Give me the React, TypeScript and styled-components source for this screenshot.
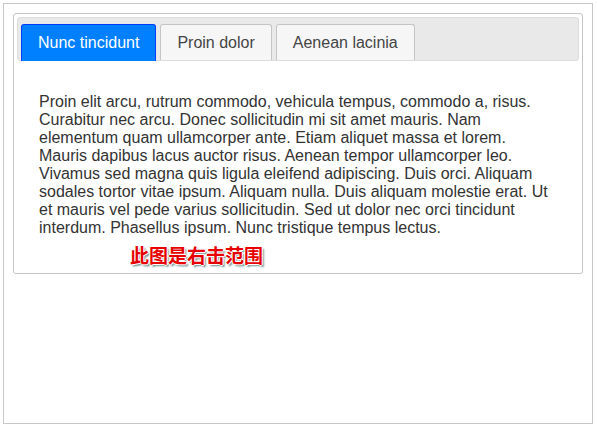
import React, { useState } from 'react';
import styled, { createGlobalStyle } from 'styled-components';

const GlobalStyle = createGlobalStyle`
    body {
        margin: 0;
        background: #fff;
        font-family: 'Liberation Sans', Arial, sans-serif;
    }
`;

const TABS = [
    {
        title: 'Nunc tincidunt',
        text:
            'Proin elit arcu, rutrum commodo, vehicula tempus, commodo a, risus. Curabitur nec arcu. Donec sollicitudin mi sit amet mauris. Nam elementum quam ullamcorper ante. Etiam aliquet massa et lorem. Mauris dapibus lacus auctor risus. Aenean tempor ullamcorper leo. Vivamus sed magna quis ligula eleifend adipiscing. Duis orci. Aliquam sodales tortor vitae ipsum. Aliquam nulla. Duis aliquam molestie erat. Ut et mauris vel pede varius sollicitudin. Sed ut dolor nec orci tincidunt interdum. Phasellus ipsum. Nunc tristique tempus lectus.',
    },
    {
        title: 'Proin dolor',
        text:
            'Morbi tincidunt, dui sit amet facilisis feugiat, odio metus gravida ante, ut pharetra massa metus id nunc. Duis scelerisque molestie turpis. Sed fringilla, massa eget luctus malesuada, metus eros molestie lectus, ut tempus eros massa ut dolor.',
    },
    {
        title: 'Aenean lacinia',
        text:
            'Mauris eleifend est et turpis. Duis id erat. Suspendisse potenti. Aliquam vulputate, pede vel vehicula accumsan, mi neque rutrum erat, eu congue orci lorem eget lorem. Vestibulum non ante.',
    },
];

const App: React.FC = () => {
    const [active, setActive] = useState(0);

    return (
        <>
            <GlobalStyle />
            <Frame>
                <Widget>
                    <Nav>
                        {TABS.map((tab, i) => (
                            <Tab key={tab.title} $active={i === active} onClick={() => setActive(i)}>
                                {tab.title}
                            </Tab>
                        ))}
                    </Nav>
                    <Panel>
                        <p>{TABS[active].text}</p>
                    </Panel>
                    <Note>此图是右击范围</Note>
                </Widget>
            </Frame>
        </>
    );
};

const Frame = styled.div`
    box-sizing: border-box;
    margin: 3px;
    width: 590px;
    height: 421px;
    padding: 9px;
    border: 1px solid #c8c8c8;
`;

const Widget = styled.div`
    position: relative;
    box-sizing: border-box;
    padding: 3px;
    border: 1px solid #c5c5c5;
    border-radius: 3px;
    background: #fff;
    color: #333;
    font-size: 16px;
`;

const Nav = styled.ul`
    display: flex;
    align-items: flex-end;
    gap: 4px;
    margin: 0;
    padding: 3px 3px 0;
    list-style: none;
    border: 1px solid #dddddd;
    border-radius: 3px;
    background: #e9e9e9;
`;

const Tab = styled.li<{ $active: boolean }>`
    margin-top: 3px;
    margin-bottom: ${(p) => (p.$active ? '-1px' : '0')};
    padding: 9px 16px ${(p) => (p.$active ? '9px' : '8px')};
    border: 1px solid ${(p) => (p.$active ? '#003eff' : '#c5c5c5')};
    border-bottom-width: 0;
    border-radius: 3px 3px 0 0;
    background: ${(p) => (p.$active ? '#007fff' : '#f6f6f6')};
    color: ${(p) => (p.$active ? '#ffffff' : '#454545')};
    line-height: 18px;
    cursor: pointer;
    white-space: nowrap;
`;

const Panel = styled.div`
    padding: 16px 22px 17px;
    line-height: 18px;
    p {
        margin: 16px 0;
    }
`;

const Note = styled.span`
    position: absolute;
    left: 116px;
    top: 231px;
    font-family: 'Noto Sans CJK SC', sans-serif;
    font-weight: bold;
    font-size: 19px;
    line-height: 19px;
    color: #e60000;
    text-shadow: 1px 0 0 #fff, -1px 0 0 #fff, 0 1px 0 #fff, 0 -1px 0 #fff, 2px 2px 2px rgba(0, 60, 60, 0.6);
    pointer-events: none;
`;

export default App;
